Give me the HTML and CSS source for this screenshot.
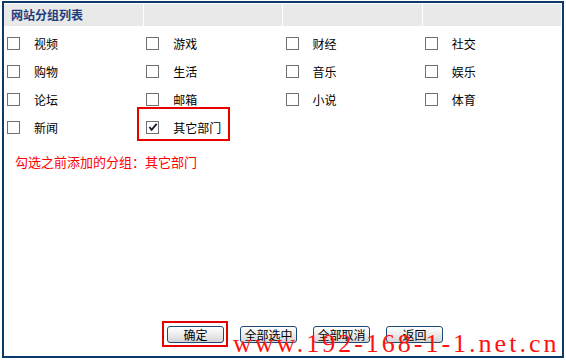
FILE: index.html
```html
<!DOCTYPE html>
<html>
<head>
  <title>网站分组列表</title>
  <meta charset="UTF-8">
  <link rel="stylesheet" href="styles.css">
</head>
<body>
  <div class="frame">
    <div class="head-row">
      <div class="head-cell">网站分组列表</div>
      <div class="head-cell"></div>
      <div class="head-cell"></div>
      <div class="head-cell"></div>
    </div>

    <div class="group-grid">
      <label class="item"><span class="box"></span>视频</label>
      <label class="item"><span class="box"></span>游戏</label>
      <label class="item"><span class="box"></span>财经</label>
      <label class="item"><span class="box"></span>社交</label>
      <label class="item"><span class="box"></span>购物</label>
      <label class="item"><span class="box"></span>生活</label>
      <label class="item"><span class="box"></span>音乐</label>
      <label class="item"><span class="box"></span>娱乐</label>
      <label class="item"><span class="box"></span>论坛</label>
      <label class="item"><span class="box"></span>邮箱</label>
      <label class="item"><span class="box"></span>小说</label>
      <label class="item"><span class="box"></span>体育</label>
      <label class="item"><span class="box"></span>新闻</label>
      <label class="item marked">
        <span class="box">
          <svg class="tick" viewBox="0 0 11 11"><path d="M1.5 5.5 L4 8.5 L9.5 2" fill="none" stroke="#1a1a2e" stroke-width="2"/></svg>
        </span>其它部门
      </label>
    </div>

    <div class="note">勾选之前添加的分组：其它部门</div>

    <div class="button-bar">
      <button class="btn marked">确定</button>
      <button class="btn">全部选中</button>
      <button class="btn">全部取消</button>
      <button class="btn">返回</button>
    </div>
  </div>
  <div class="watermark">www.192-168-1-1.net.cn</div>
</body>
</html>
```

FILE: styles.css
```css
body {
  margin: 0;
  width: 566px;
  height: 362px;
  position: relative;
  background: #fff;
  font-family: "Noto Sans CJK SC", "Liberation Sans", sans-serif;
  font-size: 12px;
  color: #000;
  overflow: hidden;
}
.frame {
  box-sizing: border-box;
  width: 562px;
  height: 357px;
  margin: 1px 0 0 2px;
  padding-top: 1px;
  border: 2px solid #0b3a6a;
  display: flex;
  flex-direction: column;
}
.head-row {
  display: grid;
  grid-template-columns: repeat(4, 1fr);
  gap: 1px;
  height: 22px;
  padding-right: 1px;
}
.head-cell {
  background-color: #e9e9e9;
  color: #1c3c7c;
  font-weight: bold;
  line-height: 22px;
  padding-left: 7px;
}
.group-grid {
  display: grid;
  grid-template-columns: repeat(4, 1fr);
  grid-auto-rows: 28px;
  margin-top: 3px;
  padding-right: 1px;
}
.item {
  display: flex;
  align-items: center;
  padding-left: 3px;
  position: relative;
}
.box {
  box-sizing: border-box;
  width: 13px;
  height: 13px;
  border: 1px solid #707070;
  background: #fff;
  margin-right: 14px;
  display: flex;
  align-items: center;
  justify-content: center;
}
.tick {
  width: 10px;
  height: 10px;
}
/* 红框标注 */
.marked::after {
  content: "";
  position: absolute;
  border: 2px solid #e60000;
  pointer-events: none;
}
.item.marked::after {
  left: -6px;
  top: -6px;
  width: 89px;
  height: 30px;
}
.note {
  color: #ff0000;
  font-size: 13px;
  line-height: 16px;
  padding: 13px 0 0 11px;
}
.button-bar {
  margin-top: auto;
  display: flex;
  gap: 16px;
  padding: 0 0 13px 163px;
}
.btn {
  position: relative;
  box-sizing: border-box;
  width: 57px;
  height: 17px;
  padding: 0;
  border: 1px solid #1f4a78;
  border-radius: 3px;
  background: linear-gradient(#ffffff, #e4e4e4 70%, #d4d4d4);
  font-family: "Noto Sans CJK SC", "Liberation Sans", sans-serif;
  font-size: 12px;
  line-height: 15px;
  color: #000;
}
.btn.marked::after {
  left: -6px;
  top: -6px;
  width: 62px;
  height: 22px;
}
.watermark {
  position: absolute;
  left: 233px;
  top: 331px;
  font-family: "Liberation Serif", serif;
  font-size: 26px;
  line-height: 26px;
  letter-spacing: 3px;
  color: #ff1010;
  white-space: nowrap;
  pointer-events: none;
}
```
